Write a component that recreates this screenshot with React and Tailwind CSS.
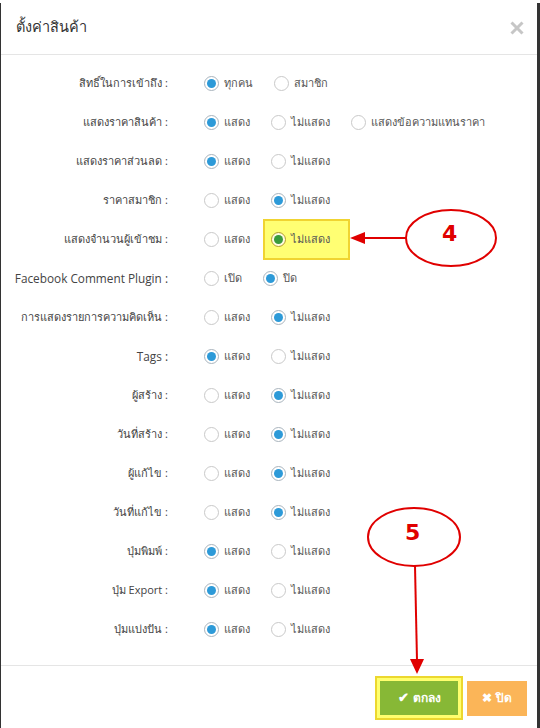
import { useState } from "react";

const rows = [
    { label: "สิทธิ์ในการเข้าถึง :", options: ["ทุกคน", "สมาชิก"], value: 0 },
    { label: "แสดงราคาสินค้า :", options: ["แสดง", "ไม่แสดง", "แสดงข้อความแทนราคา"], value: 0 },
    { label: "แสดงราคาส่วนลด :", options: ["แสดง", "ไม่แสดง"], value: 0 },
    { label: "ราคาสมาชิก :", options: ["แสดง", "ไม่แสดง"], value: 1 },
    { label: "แสดงจำนวนผู้เข้าชม :", options: ["แสดง", "ไม่แสดง"], value: 1, highlight: 1 },
    { label: "Facebook Comment Plugin :", options: ["เปิด", "ปิด"], value: 1, latin: true },
    { label: "การแสดงรายการความคิดเห็น :", options: ["แสดง", "ไม่แสดง"], value: 1 },
    { label: "Tags :", options: ["แสดง", "ไม่แสดง"], value: 0, latin: true },
    { label: "ผู้สร้าง :", options: ["แสดง", "ไม่แสดง"], value: 1 },
    { label: "วันที่สร้าง :", options: ["แสดง", "ไม่แสดง"], value: 1 },
    { label: "ผู้แก้ไข :", options: ["แสดง", "ไม่แสดง"], value: 1 },
    { label: "วันที่แก้ไข :", options: ["แสดง", "ไม่แสดง"], value: 1 },
    { label: "ปุ่มพิมพ์ :", options: ["แสดง", "ไม่แสดง"], value: 0 },
    { label: "ปุ่ม Export :", options: ["แสดง", "ไม่แสดง"], value: 0 },
    { label: "ปุ่มแบ่งปัน :", options: ["แสดง", "ไม่แสดง"], value: 0 },
];

function Radio({ checked, green }) {
    return (
        <span
            className={`w-[15px] h-[15px] rounded-full border flex items-center justify-center shrink-0 ${
                checked ? (green ? "border-[#b39a2c] bg-[#fffbe0]" : "border-[#a9b4bd] bg-white") : "border-[#c9c9c9] bg-white"
            }`}
        >
            {checked && <span className={`w-[9px] h-[9px] rounded-full ${green ? "bg-[#3a9b3c]" : "bg-[#2d9ad8]"}`} />}
        </span>
    );
}

function Row({ row }) {
    const [value, setValue] = useState(row.value);
    return (
        <div className="h-[39px] flex items-center">
            <div className={`w-[170px] pr-[3px] text-right text-[#444] ${row.latin ? "text-[11.8px]" : "text-[11px]"}`}>{row.label}</div>
            <div className="flex items-center gap-[21px] pl-[33px]">
                {row.options.map((opt, i) => (
                    <label key={opt} onClick={() => setValue(i)} className="relative flex items-center gap-[5px] cursor-pointer">
                        {row.highlight === i && (
                            <span className="absolute left-[-8px] right-[-20px] top-[-12px] bottom-[-12px] bg-[#ffff73] border-2 border-[#f0d431]" />
                        )}
                        <span className="relative flex items-center gap-[5px]">
                            <Radio checked={value === i} green={row.highlight === i} />
                            <span className="text-[11px] text-[#555]">{opt}</span>
                        </span>
                    </label>
                ))}
            </div>
        </div>
    );
}

function App() {
    return (
        <div className="w-[540px] h-[728px] bg-[#333] font-['Open_Sans',sans-serif]">
            <div className="relative w-[536px] h-[725px] mt-[3px] ml-[1px] bg-white flex flex-col">
                {/* Header */}
                <div className="h-[52px] flex items-center justify-between pl-[15px] pr-[13px] border-b border-[#e5e5e5]">
                    <h4 className="text-[14.5px] text-[#333] pb-[4px]">ตั้งค่าสินค้า</h4>
                    <svg width="14" height="14" viewBox="0 0 14 14" className="mt-[-1px]">
                        <path d="M1.5 1.5 L12.5 12.5 M12.5 1.5 L1.5 12.5" stroke="#c6c6c6" strokeWidth="3" />
                    </svg>
                </div>

                {/* Body */}
                <div className="pt-[9px] pb-[16px] border-b border-[#e5e5e5]">
                    {rows.map((row) => (
                        <Row key={row.label} row={row} />
                    ))}
                </div>

                {/* Footer */}
                <div className="flex-1 flex items-center justify-end gap-[4px] pr-[10px] pt-[2px]">
                    <div className="bg-[#ffff6e] border-2 border-[#ecd72f] p-[3px]">
                        <button className="w-[78px] h-[34px] bg-[#87b836] text-white text-[12px] font-bold flex items-center justify-center gap-[4px]">
                            <span className="text-[13px]">✔</span>ตกลง
                        </button>
                    </div>
                    <button className="w-[60px] h-[35px] bg-[#fbb558] text-white text-[12px] font-bold flex items-center justify-center gap-[4px]">
                        <span className="text-[12px]">✖</span>ปิด
                    </button>
                </div>

                {/* Annotations */}
                <svg className="absolute inset-0 pointer-events-none" width="536" height="725" viewBox="0 0 536 725">
                    <ellipse cx="450" cy="235" rx="45" ry="28" fill="white" stroke="#e00000" strokeWidth="2" />
                    <line x1="405" y1="235" x2="362" y2="235" stroke="#e00000" strokeWidth="2" />
                    <polygon points="349,235 364,229 364,241" fill="#e00000" />
                    <ellipse cx="413" cy="534" rx="46" ry="29" fill="white" stroke="#e00000" strokeWidth="2" />
                    <line x1="414" y1="563" x2="416" y2="658" stroke="#e00000" strokeWidth="2" />
                    <polygon points="416,671 409,656 423,656" fill="#e00000" />
                </svg>
                <span className="absolute left-[441px] top-[220px] text-[22px] font-bold text-[#e00000] leading-none font-['DejaVu_Sans',sans-serif]">4</span>
                <span className="absolute left-[404px] top-[519px] text-[22px] font-bold text-[#e00000] leading-none font-['DejaVu_Sans',sans-serif]">5</span>
            </div>
        </div>
    );
}

export default App;
